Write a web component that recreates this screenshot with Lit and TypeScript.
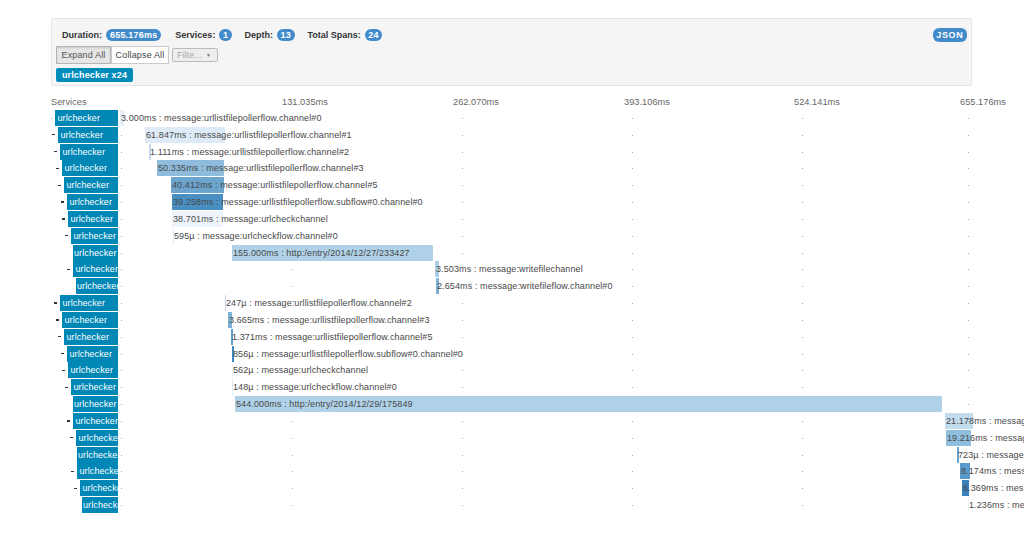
import { LitElement, html, css } from "lit";
import { customElement } from "lit/decorators.js";

type Row = [number, boolean, number, number, string, string];
const rows: Row[] = [
  [55, false, 120, 4, "#e6f0f8", "3.000ms : message:urllistfilepollerflow.channel#0"],
  [58, true, 145, 80, "#deebf7", "61.847ms : message:urllistfilepollerflow.channel#1"],
  [60, true, 149, 1.5, "#c6dbef", "1.111ms : message:urllistfilepollerflow.channel#2"],
  [62, true, 157, 67, "#8fbcdc", "50.335ms : message:urllistfilepollerflow.channel#3"],
  [64, true, 171, 53, "#6ba5cf", "40.412ms : message:urllistfilepollerflow.channel#5"],
  [67, true, 172, 51, "#4a8fc2", "39.258ms : message:urllistfilepollerflow.subflow#0.channel#0"],
  [68, true, 172, 51, "#eef4fa", "38.701ms : message:urlcheckchannel"],
  [71, true, 173, 1, "#deebf7", "595µ : message:urlcheckflow.channel#0"],
  [73, false, 232, 201, "#b0d2e8", "155.000ms : http:/entry/2014/12/27/233427"],
  [73, true, 435, 4, "#a9cfe6", "3.503ms : message:writefilechannel"],
  [76, false, 436, 3, "#7fb2d9", "2.654ms : message:writefileflow.channel#0"],
  [60, true, 225, 1, "#c6dbef", "247µ : message:urllistfilepollerflow.channel#2"],
  [62, true, 228, 4, "#7fb0d6", "3.665ms : message:urllistfilepollerflow.channel#3"],
  [64, true, 231, 2, "#5e9ccc", "1.371ms : message:urllistfilepollerflow.channel#5"],
  [67, true, 232, 1.5, "#3f87c0", "856µ : message:urllistfilepollerflow.subflow#0.channel#0"],
  [68, true, 232, 1, "#eef4fa", "562µ : message:urlcheckchannel"],
  [71, true, 232, 1, "#deebf7", "148µ : message:urlcheckflow.channel#0"],
  [73, false, 235, 707, "#b0d2e8", "544.000ms : http:/entry/2014/12/29/175849"],
  [73, true, 945, 28, "#c2dcee", "21.178ms : message:urllistfilepollerflow.channel#0"],
  [76, true, 946, 25, "#90bfdd", "19.216ms : message:urllistfilepollerflow.channel#0"],
  [77, false, 957, 1.5, "#6aa5d0", "723µ : message:urllistfilepollerflow.channel#0"],
  [77, true, 960, 10, "#5a9bcc", "8.174ms : message:urllistfilepollerflow.channel#0"],
  [80, true, 962, 7, "#3a80bb", "6.369ms : message:urllistfilepollerflow.channel#0"],
  [82, false, 968, 1, "#eef4fa", "1.236ms : message:urllistfilepollerflow.channel#0"],
];
const ticks = [121, 292, 462, 632, 802, 968];
const TRACK = 118;

@customElement("app-root")
export class AppRoot extends LitElement {
  static styles = css`
    :host { display: block; width: 1024px; height: 534px; overflow: hidden; background: #fff;
      font-family: "Liberation Sans", Arial, sans-serif; font-size: 9px; color: #555; }
    .panel { margin: 18px 52px 0 51px; height: 68px; box-sizing: border-box; background: #f5f5f5;
      border: 1px solid #e6e6e6; border-radius: 2px; padding: 8px 4px 0 4px; display: flex; flex-direction: column; }
    .stats { display: flex; align-items: center; height: 15px; padding-left: 6px; font-weight: 700; color: #333; }
    .stat { display: flex; align-items: center; gap: 4px; margin-right: 13px; }
    .stat:first-child { margin-right: 14px; }
    .badge { background: #428bca; color: #fff; border-radius: 6px; height: 12px; line-height: 12px; padding: 0 4px; font-weight: 700; letter-spacing: 0.2px; }
    .stat .narrow { padding: 0 3.5px; }
    .json { margin-left: auto; margin-right: 0; height: 14px; line-height: 14px; padding: 0 3.5px; letter-spacing: 0.7px; }
    .controls { display: flex; align-items: center; margin-top: 4px; height: 18px; }
    .btn { box-sizing: border-box; height: 18px; line-height: 16px; border: 1px solid #ccc; text-align: center; font-size: 9px; letter-spacing: 0.15px; }
    .expand { width: 55px; background: #e6e6e6; color: #555; border-color: #b5b5b5; box-shadow: inset 0 1px 2px rgba(0,0,0,.12); }
    .collapse { width: 58px; background: #fff; color: #444; }
    .filter { box-sizing: border-box; width: 46px; height: 14px; line-height: 12px; margin-left: 3px; border: 1px solid #bbb; border-radius: 2px;
      background: #eee; color: #aaa; padding-left: 4px; display: flex; justify-content: space-between; padding-right: 6px; font-size: 9px; }
    .caret { color: #777; font-size: 5px; }
    .tag { align-self: flex-start; margin-top: 4px; height: 14px; line-height: 14px; width: 77px; box-sizing: border-box; text-align: center;
      background: #008cba; color: #fff; font-weight: 700; border-radius: 2px; letter-spacing: 0.15px; }
    .axis { height: 12px; margin: 10px 0 0 51px; line-height: 12px; display: grid; grid-template-columns: 231px 171px 171px 170px 166px auto; font-size: 9.2px; color: #666; letter-spacing: 0.05px; }
    .rows { margin-top: 2px; display: flex; flex-direction: column; }
    .row { display: flex; height: 16.83px; align-items: flex-start; }
    .svc { flex: 0 0 ${TRACK}px; width: ${TRACK}px; display: flex; justify-content: flex-end; align-items: center; height: 16px; }
    .dash { width: 3.5px; height: 1.3px; background: #333; margin-right: 3px; }
    .dot0 { width: 1px; height: 1px; background: #999; margin-right: 3px; }
    .label { box-sizing: border-box; height: 16px; line-height: 16px; background: #0087b6; color: #fff; font-size: 9px; overflow: hidden; white-space: nowrap; letter-spacing: 0.1px; }
    .track { position: relative; flex: 1; height: 16px; }
    .bar { position: absolute; top: 0; height: 16px; }
    .tick { position: absolute; top: 8px; width: 1px; height: 1px; background: #aaa; }
    .text { position: absolute; top: 0; line-height: 16px; white-space: nowrap; color: #484848; letter-spacing: 0.11px; }
  `;

  private row(r: Row) {
    const [left, dash, x, w, color, text] = r;
    const end = x + text.length * 4.1;
    const shown = ticks.filter((t) => (t < x || t > end) && !(t >= x && t <= x + w));
    return html`<div class="row">
      <div class="svc">
        ${left === 55 ? html`<span class="dot0"></span>` : dash ? html`<span class="dash"></span>` : ""}
        <div class="label" style="width:${TRACK - left}px;padding-left:${dash || left === 55 ? 2.5 : 1}px">urlchecker</div>
      </div>
      <div class="track">
        ${shown.map((t) => html`<span class="tick" style="left:${t - TRACK}px"></span>`)}
        <span class="bar" style="left:${x - TRACK}px;width:${w}px;background:${color}"></span>
        <span class="text" style="left:${x + 1 - TRACK}px">${text}</span>
      </div>
    </div>`;
  }

  render() {
    return html`
      <div class="panel">
        <div class="stats">
          <span class="stat">Duration: <span class="badge">655.176ms</span></span>
          <span class="stat">Services: <span class="badge narrow">1</span></span>
          <span class="stat">Depth: <span class="badge narrow">13</span></span>
          <span class="stat">Total Spans: <span class="badge narrow">24</span></span>
          <span class="badge json">JSON</span>
        </div>
        <div class="controls">
          <div class="btn expand">Expand All</div>
          <div class="btn collapse">Collapse All</div>
          <div class="filter">Filte... <span class="caret">▼</span></div>
        </div>
        <div class="tag">urlchecker x24</div>
      </div>
      <div class="axis">
        <span>Services</span><span>131.035ms</span><span>262.070ms</span><span>393.106ms</span><span>524.141ms</span><span>655.176ms</span>
      </div>
      <div class="rows">${rows.map((r) => this.row(r))}</div>
    `;
  }
}
